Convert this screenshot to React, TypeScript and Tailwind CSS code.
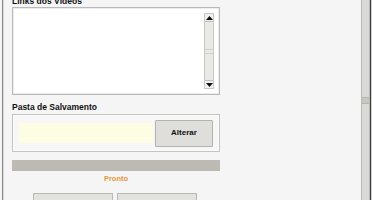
import React from 'react';

const font = { fontFamily: '"Liberation Sans", Arial, sans-serif' };

const Arrow = ({ up }: { up?: boolean }) => (
    <svg width="7" height="4" viewBox="0 0 7 4" className="block">
        <path d={up ? 'M0 4 L3.5 0 L7 4 Z' : 'M0 0 L3.5 4 L7 0 Z'} fill="#111" />
    </svg>
);

export default function App() {
    return (
        <div className="flex h-[200px] w-[372px] overflow-hidden bg-[#f5f5f5]" style={font}>
            {/* window edge */}
            <div className="ml-[2px] w-[1px] bg-[#8a8a8a]" />
            <div className="w-[1px] bg-[#d8d8d8]" />

            <div className="flex-1 flex flex-col pl-[8px] -mt-[4px]">
                <div className="w-[208px]">
                    <div className="text-[8.5px] font-bold leading-[10px] text-[#111]">Links dos Vídeos</div>

                    <div className="mt-[1px] h-[88px] border border-[#b9b9b9] bg-white flex justify-end p-[5px] shadow-[inset_0_0_0_1px_#ececec]">
                        {/* inner scrollbar */}
                        <div className="w-[10px] flex flex-col border border-[#c8c8c8] bg-[#e9e9e6]">
                            <div className="h-[8px] flex items-center justify-center bg-[#f0f0ee] border-b border-[#bdbdbd]">
                                <Arrow up />
                            </div>
                            <div className="flex-1 flex items-center justify-center">
                                <div className="w-full h-[5px] border-y border-[#cfcfcb]" />
                            </div>
                            <div className="h-[8px] flex items-center justify-center bg-[#f0f0ee] border-t border-[#bdbdbd]">
                                <Arrow />
                            </div>
                        </div>
                    </div>

                    <div className="mt-[7px] text-[8.5px] font-bold leading-[10px] text-[#111]">Pasta de Salvamento</div>

                    <div className="mt-[2px] h-[38px] border border-[#c4c4c4] bg-[#f7f7f7] flex items-center pl-[6px] pr-[5px] gap-[2px] shadow-[inset_0_0_0_1px_#fbfbfb]">
                        <div className="w-[134px] h-[20px] bg-[#fdfde3]" />
                        <button className="w-[58px] h-[27px] border border-[#b3b3b0] bg-[#dededb] text-[8px] font-bold text-[#111] rounded-[1px]">
                            Alterar
                        </button>
                    </div>

                    <div className="mt-[8px] h-[11px] bg-[#bcbab3]" />

                    <div className="mt-[3px] text-center text-[7.5px] font-bold leading-[10px] text-[#e8953a]">Pronto</div>

                    <div className="mt-[9px] flex gap-[4px] pl-[21px]">
                        <div className="w-[80px] h-[12px] border border-[#b8b8b6] bg-[#e2e2df]" />
                        <div className="w-[80px] h-[12px] border border-[#b8b8b6] bg-[#e2e2df]" />
                    </div>
                </div>
            </div>

            {/* right scrollbar */}
            <div className="w-[9px] flex flex-col items-stretch justify-center border-x border-[#b9b9b5] bg-[#d9d9d5]">
                <div className="h-[7px] bg-[#c6c6c1] border-y border-[#b5b5b0]" />
            </div>
            <div className="w-[1px] bg-[#3d3d3d]" />
            <div className="w-[1px] bg-[#cfcfcf]" />
        </div>
    );
}
